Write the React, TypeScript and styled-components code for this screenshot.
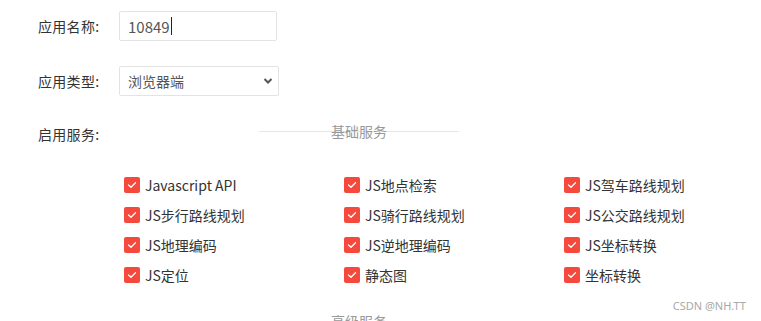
import React, { FC } from "react";
import styled, { createGlobalStyle } from "styled-components";

const GlobalStyle = createGlobalStyle`
  html, body {
    margin: 0;
    padding: 0;
    background: #fff;
  }
  body {
    font-family: "Microsoft YaHei", "Noto Sans CJK SC", "Noto Sans", sans-serif;
    font-size: 14px;
    color: #333;
    overflow: hidden;
  }
`;

const Page = styled.div`
  position: relative;
  width: 761px;
  height: 321px;
  overflow: hidden;
`;

const Form = styled.div`
  display: flex;
  flex-direction: column;
  gap: 25px;
  padding: 11px 0 0 38px;
`;

const FormRow = styled.div<{ $top?: boolean }>`
  display: flex;
  align-items: ${(p) => (p.$top ? "flex-start" : "center")};
`;

const Label = styled.div<{ $shift?: number }>`
  width: 81px;
  flex-shrink: 0;
  margin-top: ${(p) => p.$shift ?? 0}px;
  font-size: 14px;
  line-height: 20px;
  color: #333;
  letter-spacing: 0.3px;
`;

const FakeInput = styled.div`
  box-sizing: border-box;
  width: 158px;
  height: 30px;
  border: 1px solid #e3e3e3;
  border-radius: 2px;
  padding: 0 8px;
  display: flex;
  align-items: center;
  font-size: 15px;
  color: #555;
`;

const Caret = styled.span`
  display: inline-block;
  width: 1px;
  height: 18px;
  background: #222;
  margin-left: 1px;
`;

const SelectWrap = styled.div`
  position: relative;
  width: 160px;
  height: 30px;
`;

const Select = styled.select`
  appearance: none;
  box-sizing: border-box;
  width: 100%;
  height: 100%;
  border: 1px solid #e3e3e3;
  border-radius: 2px;
  background: #fff;
  padding: 0 8px;
  font-family: inherit;
  font-size: 14px;
  color: #555;
  outline: none;
`;

const Chevron = styled.svg`
  position: absolute;
  right: 6px;
  top: 11px;
  pointer-events: none;
`;

const SectionTitle = styled.div<{ $left: number; $top: number }>`
  position: relative;
  width: 200px;
  height: 20px;
  margin-left: ${(p) => p.$left}px;
  margin-top: ${(p) => p.$top}px;
  display: flex;
  align-items: center;
  justify-content: center;
  font-size: 14px;
  line-height: 20px;
  color: #999;

  &::before {
    content: "";
    position: absolute;
    left: 0;
    right: 0;
    top: 10px;
    height: 1px;
    background: #e6e6e6;
  }

  span {
    position: relative;
  }
`;

const CheckGrid = styled.div`
  display: grid;
  grid-template-columns: repeat(3, 220px);
  grid-auto-rows: 30px;
  margin: 26px 0 0 124px;
`;

const CheckItem = styled.label`
  display: flex;
  align-items: center;
  gap: 5px;
  font-size: 14px;
  color: #333;
`;

const Box = styled.span`
  width: 16px;
  height: 16px;
  border-radius: 2px;
  background: #f5493d;
  display: flex;
  align-items: center;
  justify-content: center;
  flex-shrink: 0;
`;

const Watermark = styled.div`
  position: absolute;
  right: 15px;
  top: 298px;
  font-family: "Noto Sans", "Liberation Sans", sans-serif;
  font-size: 11px;
  color: #a8a8a8;
`;

const basic = [
  "Javascript API",
  "JS地点检索",
  "JS驾车路线规划",
  "JS步行路线规划",
  "JS骑行路线规划",
  "JS公交路线规划",
  "JS地理编码",
  "JS逆地理编码",
  "JS坐标转换",
  "JS定位",
  "静态图",
  "坐标转换",
];

const Check = () => (
  <Box>
    <svg width="10" height="8" viewBox="0 0 10 8" fill="none">
      <path d="M1.5 4L4 6.3L8.5 1.7" stroke="#fff" strokeWidth="1.3" strokeLinecap="round" strokeLinejoin="round" />
    </svg>
  </Box>
);

const App: FC = () => (
  <Page>
    <GlobalStyle />
    <Form>
      <FormRow>
        <Label>应用名称:</Label>
        <FakeInput>
          10849
          <Caret />
        </FakeInput>
      </FormRow>
      <FormRow>
        <Label>应用类型:</Label>
        <SelectWrap>
          <Select defaultValue="browser">
            <option value="browser">浏览器端</option>
            <option value="server">服务端</option>
          </Select>
          <Chevron width="10" height="8" viewBox="0 0 10 8" fill="none">
            <path d="M1.5 2L5 5.5L8.5 2" stroke="#555" strokeWidth="2" />
          </Chevron>
        </SelectWrap>
      </FormRow>
      <FormRow $top>
        <Label $shift={3}>启用服务:</Label>
        <SectionTitle $left={140} $top={0}>
          <span>基础服务</span>
        </SectionTitle>
      </FormRow>
    </Form>
    <CheckGrid>
      {basic.map((name) => (
        <CheckItem key={name}>
          <Check />
          {name}
        </CheckItem>
      ))}
    </CheckGrid>
    <SectionTitle $left={259} $top={21}>
      <span>高级服务</span>
    </SectionTitle>
    <Watermark>CSDN @NH.TT</Watermark>
  </Page>
);

export default App;
